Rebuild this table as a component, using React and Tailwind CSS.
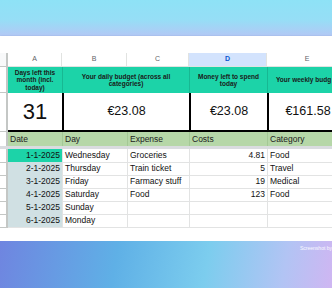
import React from 'react';

const cols = 'grid grid-cols-[8px_54px_65px_62px_78px_80px]';

const rows = [
  { date: '1-1-2025', day: 'Wednesday', expense: 'Groceries', cost: '4.81', cat: 'Food' },
  { date: '2-1-2025', day: 'Thursday', expense: 'Train ticket', cost: '5', cat: 'Travel' },
  { date: '3-1-2025', day: 'Friday', expense: 'Farmacy stuff', cost: '19', cat: 'Medical' },
  { date: '4-1-2025', day: 'Saturday', expense: 'Food', cost: '123', cat: 'Food' },
  { date: '5-1-2025', day: 'Sunday', expense: '', cost: '', cat: '' },
  { date: '6-1-2025', day: 'Monday', expense: '', cost: '', cat: '' },
];

const App = () => {
  return (
    <div className="w-[332px] h-[288px] overflow-hidden flex flex-col font-['Liberation_Sans',Arial,sans-serif]">
      {/* top backdrop */}
      <div className="h-[36px] shrink-0 bg-[linear-gradient(180deg,#8ee2f6_0%,#96def6_55%,#b3c8f5_100%)]" />

      {/* sheet panel */}
      <div className="h-[205px] shrink-0 bg-white overflow-hidden shadow-[0_1px_2px_rgba(20,40,90,0.6)]">
        <div className="h-[17px]" />

        {/* column letters */}
        <div className={`${cols} h-[14px] text-[7px] text-[#5f6368]`}>
          <div className="border-r-2 border-b border-[#c4c7c5] bg-[#f8f9fa]" />
          <div className="flex items-center justify-center border-r border-b border-[#e1e3e1]">A</div>
          <div className="flex items-center justify-center border-r border-b border-[#e1e3e1]">B</div>
          <div className="flex items-center justify-center border-r border-b border-[#e1e3e1]">C</div>
          <div className="flex items-center justify-center border-r border-b border-[#e1e3e1] bg-[#d3e3fd] text-[#0b57d0] font-bold">D</div>
          <div className="flex items-center justify-center border-b border-[#e1e3e1]">E</div>
        </div>

        {/* title row */}
        <div className={`${cols} h-[26px] text-[6.5px] leading-[7.5px] font-bold text-[#1a1a1a] text-center`}>
          <div className="border-r-2 border-b border-[#c4c7c5]" />
          <div className="bg-[#1cd3a8] flex items-center justify-center px-[2px]">Days left this month (incl. today)</div>
          <div className="col-span-2 bg-[#1cd3a8] flex items-center justify-center px-[6px] border-l border-[#17b892]">Your daily budget (across all categories)</div>
          <div className="bg-[#1cd3a8] flex items-center justify-center px-[3px] border-l border-[#17b892]">Money left to spend today</div>
          <div className="bg-[#1cd3a8] flex items-center justify-start pl-[8px] whitespace-nowrap border-l border-[#17b892]">Your weekly budg</div>
        </div>

        {/* values row */}
        <div className={`${cols} h-[39px] text-[#111]`}>
          <div className="border-r-2 border-b border-[#c4c7c5]" />
          <div className="flex items-center justify-center text-[22px] border-b-2 border-black">31</div>
          <div className="col-span-2 flex items-center justify-center text-[12.5px] border-l-2 border-b-2 border-black">€23.08</div>
          <div className="flex items-center justify-center text-[12.5px] border-l-2 border-b-2 border-black">€23.08</div>
          <div className="flex items-center justify-center text-[12.5px] border-l-2 border-b-2 border-black whitespace-nowrap">€161.58</div>
        </div>

        {/* header row */}
        <div className={`${cols} h-[14px] text-[8.5px] text-[#222] bg-[#b6d7a8]`}>
          <div className="bg-white border-r-2 border-[#c4c7c5]" />
          <div className="flex items-center px-[2px]">Date</div>
          <div className="flex items-center px-[2px] border-l border-[#a4c896]">Day</div>
          <div className="flex items-center px-[2px] border-l border-[#a4c896]">Expense</div>
          <div className="flex items-center px-[2px] border-l border-[#a4c896]">Costs</div>
          <div className="flex items-center px-[2px] border-l border-[#a4c896]">Category</div>
        </div>
        <div className="h-[3px] bg-[#dadce0]" />

        {/* data rows */}
        {rows.map((r, i) => (
          <div key={r.date} className={`${cols} h-[13px] text-[8.5px] text-[#111]`}>
            <div className="border-r-2 border-b border-[#c4c7c5]" />
            <div className={`flex items-center justify-end px-[2px] border-b border-[#e2e3e3] ${i === 0 ? 'bg-[#1cd3a8]' : 'bg-[#d0e0e3]'}`}>{r.date}</div>
            <div className="flex items-center px-[2px] border-l border-b border-[#e2e3e3] whitespace-nowrap">{r.day}</div>
            <div className="flex items-center px-[2px] border-l border-b border-[#e2e3e3] whitespace-nowrap overflow-hidden">{r.expense}</div>
            <div className="flex items-center justify-end px-[2px] border-l border-b border-[#e2e3e3]">{r.cost}</div>
            <div className="flex items-center px-[2px] border-l border-b border-[#e2e3e3]">{r.cat}</div>
          </div>
        ))}
      </div>

      {/* bottom backdrop */}
      <div className="flex-1 relative bg-[linear-gradient(100deg,#6f85e0_0%,#5fb0e6_35%,#7ccdee_62%,#b2c4f4_85%,#cfb6f2_100%)]">
        <div className="absolute right-0 top-[4px] text-[5px] text-white/90 whitespace-nowrap">Screenshot by</div>
      </div>
    </div>
  );
};

export default App;
